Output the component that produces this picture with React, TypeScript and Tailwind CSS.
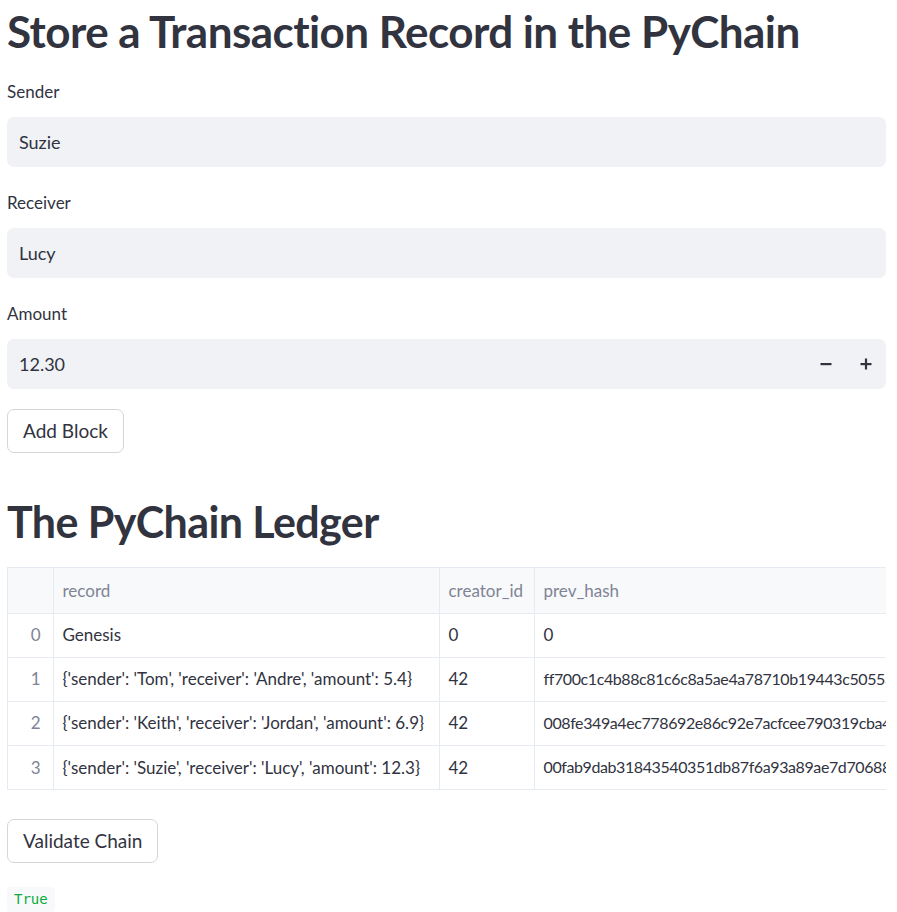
import React from "react";

const FONT = { fontFamily: '"Lato", "Liberation Sans", sans-serif' };

const ROWS = [
  { i: 0, record: "Genesis", creator: "0", hash: "0" },
  {
    i: 1,
    record: "{'sender': 'Tom', 'receiver': 'Andre', 'amount': 5.4}",
    creator: "42",
    hash: "ff700c1c4b88c81c6c8a5ae4a78710b19443c50553e1",
  },
  {
    i: 2,
    record: "{'sender': 'Keith', 'receiver': 'Jordan', 'amount': 6.9}",
    creator: "42",
    hash: "008fe349a4ec778692e86c92e7acfcee790319cba4e7",
  },
  {
    i: 3,
    record: "{'sender': 'Suzie', 'receiver': 'Lucy', 'amount': 12.3}",
    creator: "42",
    hash: "00fab9dab31843540351db87f6a93a89ae7d70688c2e",
  },
];

function Field({ label, value, stepper, last }: { label: string; value: string; stepper?: boolean; last?: boolean }) {
  return (
    <div className={last ? "mb-[20px]" : "mb-[26px]"}>
      <label className="block text-[17px] text-[#31333f] leading-[20px] mb-[15px]">{label}</label>
      <div className="flex items-center h-[50px] bg-[#f0f2f6] rounded-[7px] pl-[12px]">
        <span className="flex-1 text-[18px] text-[#31333f]">{value}</span>
        {stepper && (
          <div className="flex items-center">
            <button className="w-[40px] h-[50px] flex items-center justify-center">
              <svg width="12" height="12" viewBox="0 0 12 12">
                <rect x="0.5" y="5" width="11" height="2.2" fill="#31333f" />
              </svg>
            </button>
            <button className="w-[40px] h-[50px] flex items-center justify-center">
              <svg width="12" height="12" viewBox="0 0 12 12">
                <rect x="0.5" y="5" width="11" height="2.2" fill="#31333f" />
                <rect x="4.9" y="0.5" width="2.2" height="11" fill="#31333f" />
              </svg>
            </button>
          </div>
        )}
      </div>
    </div>
  );
}

export default function App() {
  return (
    <div className="min-h-screen bg-white text-[#31333f] overflow-hidden" style={FONT}>
      <div className="w-[886px] pl-[7px] pt-[2px]">
        <h1 className="text-[44px] font-bold leading-[58px] tracking-[-0.55px] mb-[22px]">
          Store a Transaction Record in the PyChain
        </h1>

        <Field label="Sender" value="Suzie" />
        <Field label="Receiver" value="Lucy" />
        <Field label="Amount" value="12.30" stepper last />

        <button className="block h-[44px] px-[15px] border border-[#d6d6d9] rounded-[7px] bg-white text-[19px] text-[#31333f]">
          Add Block
        </button>

        <h2 className="text-[43px] font-bold leading-[58px] tracking-[-0.6px] mt-[40px] mb-[16px]">
          The PyChain Ledger
        </h2>

        <div className="overflow-hidden border border-[#e6eaf1] border-r-0">
          <table className="border-collapse text-[17px] table-fixed w-[1200px]">
            <colgroup>
              <col className="w-[45px]" />
              <col className="w-[386px]" />
              <col className="w-[95px]" />
              <col className="w-[674px]" />
            </colgroup>
            <thead>
              <tr className="h-[45px] bg-[#f8f9fb] text-[#808495]">
                <th className="border-r border-b border-[#e6eaf1]" />
                <th className="text-left font-normal px-[9px] border-r border-b border-[#e6eaf1]">record</th>
                <th className="text-left font-normal px-[9px] border-r border-b border-[#e6eaf1]">creator_id</th>
                <th className="text-left font-normal px-[9px] border-b border-[#e6eaf1]">prev_hash</th>
              </tr>
            </thead>
            <tbody>
              {ROWS.map((r, idx) => (
                <tr key={r.i} className="h-[44px]">
                  <td
                    className={`text-right pr-[12px] text-[#808495] border-r border-[#e6eaf1] ${idx < ROWS.length - 1 ? "border-b" : ""}`}
                  >
                    {r.i}
                  </td>
                  <td className={`px-[9px] whitespace-nowrap border-r border-[#e6eaf1] ${idx < ROWS.length - 1 ? "border-b" : ""}`}>
                    {r.record}
                  </td>
                  <td className={`px-[9px] border-r border-[#e6eaf1] ${idx < ROWS.length - 1 ? "border-b" : ""}`}>
                    {r.creator}
                  </td>
                  <td
                    className={`px-[9px] whitespace-nowrap border-[#e6eaf1] ${r.hash.length > 1 ? "text-[16px] tracking-[-0.4px]" : ""} ${idx < ROWS.length - 1 ? "border-b" : ""}`}
                  >
                    {r.hash}
                  </td>
                </tr>
              ))}
            </tbody>
          </table>
        </div>

        <button className="block mt-[29px] h-[44px] px-[15px] border border-[#d6d6d9] rounded-[7px] bg-white text-[19px] text-[#31333f]">
          Validate Chain
        </button>

        <div className="mt-[23px]">
          <code
            className="inline-block bg-[#f8f9fb] rounded-[4px] px-[7px] py-[3px] text-[14px] leading-[19px] text-[#09ab3b]"
            style={{ fontFamily: '"DejaVu Sans Mono", "Liberation Mono", monospace' }}
          >
            True
          </code>
        </div>
      </div>
    </div>
  );
}
